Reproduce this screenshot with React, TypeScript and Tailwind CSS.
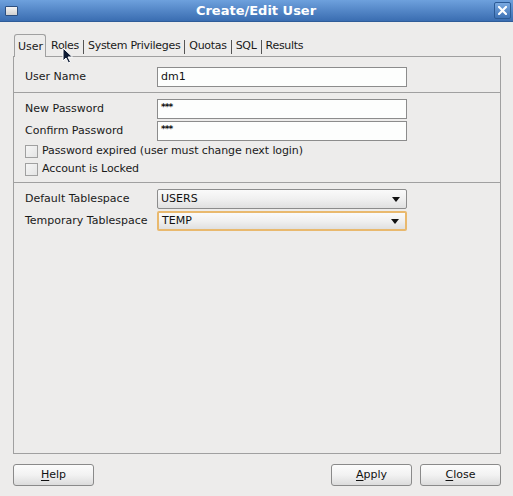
import { ReactNode } from 'react';

const font = { fontFamily: '"DejaVu Sans", "Liberation Sans", sans-serif' };

function TextField({ value, mono }: { value: string; mono?: boolean }) {
  return (
    <div className="w-[250px] h-[20px] border border-[#8c8c8c] bg-[#fdfefd] flex items-center pl-[3px] text-[11px] text-[#111]">
      {mono ? <span className="text-[9px] tracking-[-1px] font-bold leading-none mt-[-4px]">{value}</span> : value}
    </div>
  );
}

function Select({ value, focused }: { value: string; focused?: boolean }) {
  return (
    <div
      className={
        'w-[250px] h-[20px] rounded-[2px] flex items-center justify-between pl-[3px] pr-[6px] text-[11px] text-[#111] bg-gradient-to-b from-[#fafafa] via-[#f0f0f0] to-[#e0e0e0] ' +
        (focused ? 'border-2 border-[#e9b96e] pl-[2px]' : 'border border-[#8c8c8c]')
      }
    >
      <span>{value}</span>
      <svg width="8" height="5" viewBox="0 0 8 5">
        <polygon points="0,0 8,0 4,5" fill="#111" />
      </svg>
    </div>
  );
}

function Checkbox({ label }: { label: string }) {
  return (
    <div className="h-[18px] flex items-center gap-[4px]">
      <div className="w-[13px] h-[13px] border border-[#a0a0a0] bg-gradient-to-br from-[#f6f6f6] to-[#e4e4e4]" />
      <span className="tracking-[-0.1px]">{label}</span>
    </div>
  );
}

function Row({ label, children }: { label: string; children: ReactNode }) {
  return (
    <div className="flex items-center">
      <span className="w-[132px]">{label}</span>
      {children}
    </div>
  );
}

function Button({ mnemonic, rest }: { mnemonic: string; rest: string }) {
  return (
    <div className="w-[81px] h-[22px] rounded-[3px] border border-[#8a8a8a] bg-gradient-to-b from-[#fcfcfc] via-[#f2f2f2] to-[#dcdcdc] flex items-center justify-center text-[11px] text-[#111]">
      <span>
        <span className="underline underline-offset-2">{mnemonic}</span>
        {rest}
      </span>
    </div>
  );
}

export default function App() {
  const tabs = ['Roles', 'System Privileges', 'Quotas', 'SQL', 'Results'];

  return (
    <div className="relative w-[513px] h-[496px] bg-[#edeceb] flex flex-col text-[11px] text-[#1a1a1a]" style={font}>
      {/* title bar */}
      <div className="h-[22px] bg-gradient-to-b from-[#6ea1dd] to-[#3a6db1] flex items-center justify-between px-[5px] border-b border-[#2f5c98]">
        <div className="w-[13px] h-[10px] bg-gradient-to-b from-[#f4f4f4] to-[#cfcfcf] border border-[#2c4f80] rounded-[1px]" />
        <span className="text-white font-bold text-[13px]">Create/Edit User</span>
        <div className="w-[17px] h-[17px] rounded-[2px] border border-[#2b5a95] bg-gradient-to-b from-[#7aa9e0] to-[#3f73b6] flex items-center justify-center mr-[-3px]">
          <svg width="9" height="9" viewBox="0 0 9 9">
            <path d="M1 1 L8 8 M8 1 L1 8" stroke="white" strokeWidth="2.2" strokeLinecap="square" />
          </svg>
        </div>
      </div>

      <div className="flex-1 flex flex-col pl-[13px] pr-[12px] pt-[11px]">
        {/* tabs */}
        <div className="flex items-end h-[23px] ml-[1px]">
          <div className="h-[23px] pl-[3px] pr-[2px] pt-[2px] border border-b-0 border-[#a0a0a0] rounded-t-[3px] bg-[#edeceb] flex items-center relative top-[1px] z-10">
            User
          </div>
          <div className="flex items-center h-[22px] ml-[5px] pt-[3px] tracking-[-0.3px]">
            {tabs.map((t, i) => (
              <div key={t} className="flex items-center">
                <span>{t}</span>
                {i < tabs.length - 1 && <div className="w-px h-[14px] bg-[#555] mx-[4px]" />}
              </div>
            ))}
          </div>
        </div>

        {/* panel */}
        <div className="w-[488px] h-[398px] border border-[#a0a0a0] flex flex-col">
          <div className="pt-[10px] pb-[5px] pl-[11px]">
            <Row label="User Name">
              <TextField value="dm1" />
            </Row>
          </div>
          <div className="h-px bg-[#a0a0a0]" />
          <div className="pt-[6px] pb-[4px] pl-[11px] flex flex-col">
            <Row label="New Password">
              <TextField value="***" mono />
            </Row>
            <div className="mt-[2px]">
              <Row label="Confirm Password">
                <TextField value="***" mono />
              </Row>
            </div>
            <div className="mt-[1px]">
              <Checkbox label="Password expired (user must change next login)" />
              <Checkbox label="Account is Locked" />
            </div>
          </div>
          <div className="h-px bg-[#a0a0a0]" />
          <div className="pt-[6px] pl-[11px] flex flex-col gap-[2px]">
            <Row label="Default Tablespace">
              <Select value="USERS" />
            </Row>
            <Row label="Temporary Tablespace">
              <Select value="TEMP" focused />
            </Row>
          </div>
        </div>

        {/* buttons */}
        <div className="flex items-center justify-between mt-[10px] w-[488px]">
          <Button mnemonic="H" rest="elp" />
          <div className="flex gap-[8px]">
            <Button mnemonic="A" rest="pply" />
            <Button mnemonic="C" rest="lose" />
          </div>
        </div>
      </div>

      {/* mouse pointer */}
      <svg className="absolute left-[62px] top-[47px]" width="12" height="17" viewBox="0 0 12 17">
        <path d="M1 1 L1 14 L4 11 L6.5 16 L8.5 15 L6 10 L10.5 10 Z" fill="#0d1a33" stroke="white" strokeWidth="1" />
      </svg>
    </div>
  );
}
